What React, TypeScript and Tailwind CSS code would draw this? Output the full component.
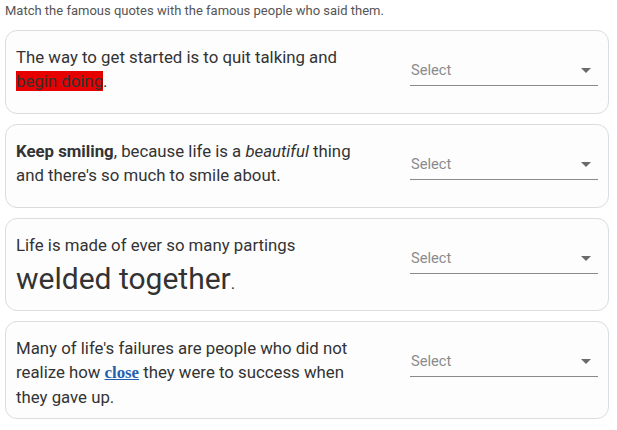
import React from "react";

const Select: React.FC = () => (
  <div className="w-[188px] shrink-0 pt-[15px]">
    <div className="flex items-center justify-between border-b border-[#8a8a8a] pb-[5px] pl-[1px] pr-[6px]">
      <span className="text-[14.7px] leading-[20px] text-[#8b8b8b]">Select</span>
      <svg width="10" height="5" viewBox="0 0 10 5" className="mr-[1px]">
        <path d="M0 0h10L5 5z" fill="#6b6b6b" />
      </svg>
    </div>
  </div>
);

const Card: React.FC<{ children: React.ReactNode }> = ({ children }) => (
  <div className="flex min-h-[84px] justify-between rounded-[12px] border border-[#dadce0] bg-[#fdfdfe] pl-[10px] pr-[10px] pt-[14px] pb-[9px]">
    <div className="w-[355px] text-[16.8px] leading-[24px] text-[#333333]">{children}</div>
    <Select />
  </div>
);

export default function App() {
  return (
    <div className="w-[617px] bg-white px-[5px] pt-[3px] font-['Roboto',sans-serif]">
      <p className="text-[13px] leading-[16px] text-[#555555]">
        Match the famous quotes with the famous people who said them.
      </p>
      <div className="mt-[11px] flex w-[604px] flex-col gap-[10px]">
        <Card>
          The way to get started is to quit talking and{" "}
          <span className="bg-[#e60000]">begin doing</span>.
        </Card>
        <Card>
          <b className="font-bold">Keep smiling</b>, because life is a <i>beautiful</i> thing and
          there's so much to smile about.
        </Card>
        <Card>
          Life is made of ever so many partings{" "}
          <span className="text-[30px] leading-[44px]">welded together</span>.
        </Card>
        <Card>
          Many of life's failures are people who did not realize how{" "}
          <a
            href="#"
            className="font-['Liberation_Serif',serif] font-bold text-[#1f5fae] underline"
          >
            close
          </a>{" "}
          they were to success when they gave up.
        </Card>
      </div>
    </div>
  );
}
